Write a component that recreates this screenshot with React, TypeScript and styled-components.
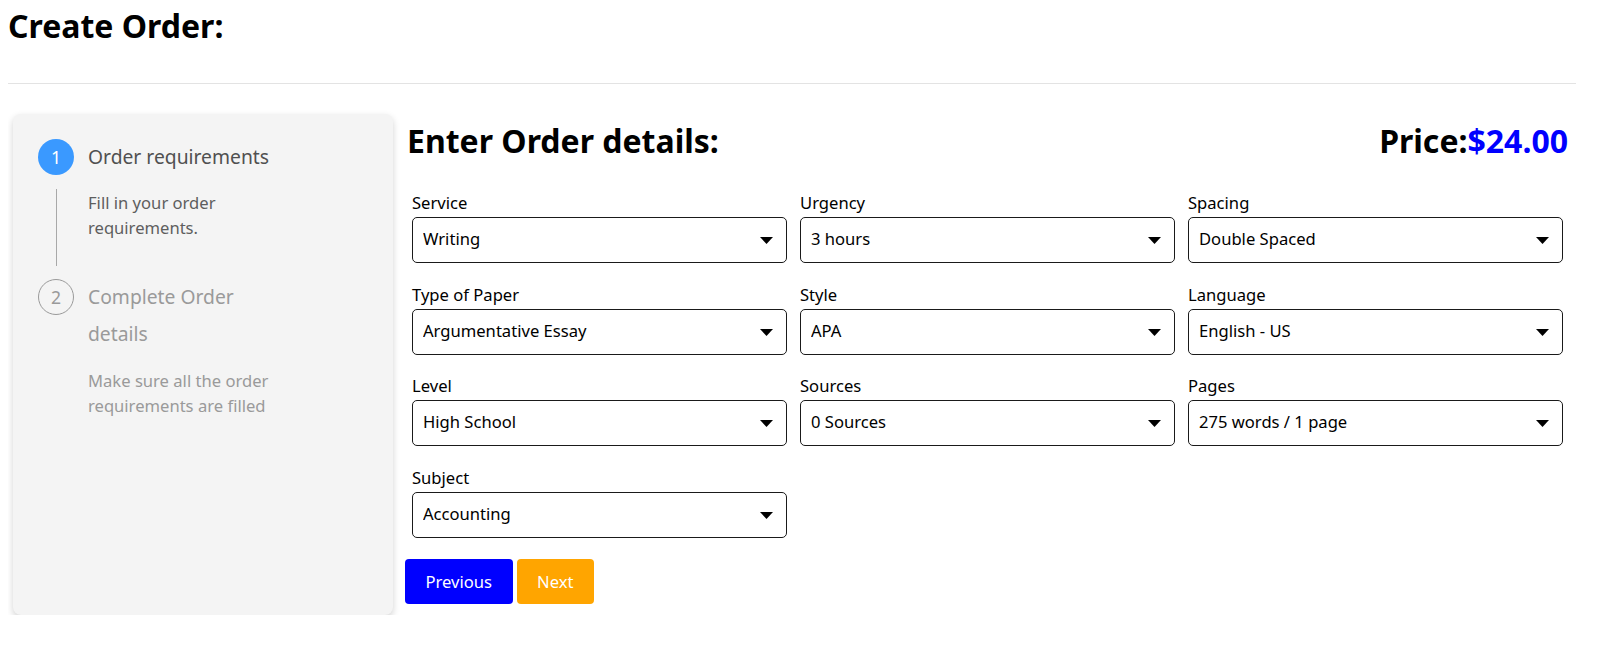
import React from "react";
import styled, { createGlobalStyle } from "styled-components";

const GlobalStyle = createGlobalStyle`
  * { box-sizing: border-box; }
  body {
    margin: 8px;
    background: #ffffff;
    color: #000000;
    font-family: "Noto Sans", "Open Sans", sans-serif;
  }
`;

const Page = styled.div`
  width: 1568px;
  display: flex;
  flex-direction: column;
`;

const PageTitle = styled.h1`
  margin: 0;
  font-size: 32px;
  line-height: 36px;
  font-weight: 700;
`;

const Divider = styled.div`
  height: 1px;
  margin-top: 39px;
  background: #e3e3e3;
`;

const Content = styled.div`
  display: flex;
  align-items: flex-start;
  gap: 12px;
  margin-top: 30px;
  padding-left: 5px;
`;

const Sidebar = styled.aside`
  flex: 0 0 380px;
  height: 501px;
  background: #f4f4f4;
  border-radius: 8px;
  box-shadow: 0 3px 7px rgba(0, 0, 0, 0.18);
  padding: 24px 0 0 25px;
  display: flex;
  flex-direction: column;
`;

const Step = styled.div`
  display: grid;
  grid-template-columns: 36px 196px;
  column-gap: 14px;
`;

const StepHead = styled.div`
  display: flex;
  flex-direction: column;
  align-items: center;
`;

const Circle = styled.div<{ $active?: boolean }>`
  width: 36px;
  height: 36px;
  margin-top: 1px;
  border-radius: 50%;
  display: flex;
  align-items: center;
  justify-content: center;
  font-size: 17.6px;
  background: ${(p) => (p.$active ? "#3a99ff" : "transparent")};
  color: ${(p) => (p.$active ? "#ffffff" : "#9a9a9a")};
  border: ${(p) => (p.$active ? "none" : "1px solid #9a9a9a")};
`;

const StepLine = styled.div`
  width: 1px;
  height: 77px;
  margin: 14px 0 12px;
  background: #a8a8a8;
`;

const StepMain = styled.div`
  display: flex;
  flex-direction: column;
`;

const StepTitle = styled.div<{ $active?: boolean }>`
  font-size: 19.3px;
  line-height: 37px;
  color: ${(p) => (p.$active ? "#505050" : "#9a9a9a")};
`;

const StepDesc = styled.div<{ $active?: boolean }>`
  margin-top: ${(p) => (p.$active ? "15px" : "16px")};
  font-size: 16.6px;
  line-height: 25px;
  color: ${(p) => (p.$active ? "#5e5e5e" : "#9a9a9a")};
`;

const Main = styled.main`
  flex: 1;
  padding-right: 6px;
  display: flex;
  flex-direction: column;
`;

const HeadRow = styled.div`
  display: flex;
  justify-content: space-between;
  align-items: baseline;
  margin-top: 7px;
  padding: 0 2px;
`;

const Heading = styled.h2`
  margin: 0;
  font-size: 32px;
  line-height: 40px;
  font-weight: 700;
`;

const Price = styled.div`
  font-size: 32px;
  line-height: 40px;
  font-weight: 700;
`;

const Amount = styled.span`
  color: #0000ff;
`;

const FormGrid = styled.div`
  display: grid;
  grid-template-columns: repeat(3, 375px);
  column-gap: 13px;
  row-gap: 19.7px;
  margin-top: 30px;
  padding: 0 7px;
`;

const Field = styled.label`
  display: flex;
  flex-direction: column;
`;

const FieldLabel = styled.span`
  font-size: 16.6px;
  line-height: 24px;
  margin-bottom: 2px;
`;

const SelectWrap = styled.div`
  position: relative;
  height: 46px;
`;

const Select = styled.select`
  appearance: none;
  -webkit-appearance: none;
  width: 100%;
  height: 46px;
  border: 1px solid #1a1a1a;
  border-radius: 5px;
  background: #ffffff;
  padding: 0 36px 3px 10px;
  font-family: inherit;
  font-size: 16.6px;
  color: #000000;
  outline: none;
`;

const Arrow = styled.svg`
  position: absolute;
  right: 14px;
  top: 20px;
  width: 13px;
  height: 7px;
  pointer-events: none;
`;

const ButtonRow = styled.div`
  display: flex;
  gap: 4px;
  margin-top: 21px;
`;

const Button = styled.button<{ $bg: string }>`
  height: 45px;
  padding: 0 20.5px;
  border: none;
  border-radius: 4px;
  background: ${(p) => p.$bg};
  color: #ffffff;
  font-family: inherit;
  font-size: 16.6px;
  cursor: pointer;
`;

type FieldDef = { label: string; value: string };

const fields: FieldDef[] = [
  { label: "Service", value: "Writing" },
  { label: "Urgency", value: "3 hours" },
  { label: "Spacing", value: "Double Spaced" },
  { label: "Type of Paper", value: "Argumentative Essay" },
  { label: "Style", value: "APA" },
  { label: "Language", value: "English - US" },
  { label: "Level", value: "High School" },
  { label: "Sources", value: "0 Sources" },
  { label: "Pages", value: "275 words / 1 page" },
  { label: "Subject", value: "Accounting" },
];

function SelectField({ label, value }: FieldDef) {
  return (
    <Field>
      <FieldLabel>{label}</FieldLabel>
      <SelectWrap>
        <Select defaultValue={value}>
          <option value={value}>{value}</option>
        </Select>
        <Arrow viewBox="0 0 13 7" aria-hidden="true">
          <polygon points="0,0 13,0 6.5,7" fill="#000" />
        </Arrow>
      </SelectWrap>
    </Field>
  );
}

export default function App() {
  return (
    <>
      <GlobalStyle />
      <Page>
        <PageTitle>Create Order:</PageTitle>
        <Divider />
        <Content>
          <Sidebar>
            <Step>
              <StepHead>
                <Circle $active>1</Circle>
                <StepLine />
              </StepHead>
              <StepMain>
                <StepTitle $active>Order requirements</StepTitle>
                <StepDesc $active>Fill in your order requirements.</StepDesc>
              </StepMain>
            </Step>
            <Step>
              <StepHead>
                <Circle>2</Circle>
              </StepHead>
              <StepMain>
                <StepTitle>Complete Order details</StepTitle>
                <StepDesc>Make sure all the order requirements are filled</StepDesc>
              </StepMain>
            </Step>
          </Sidebar>
          <Main>
            <HeadRow>
              <Heading>Enter Order details:</Heading>
              <Price>
                Price:<Amount>$24.00</Amount>
              </Price>
            </HeadRow>
            <FormGrid>
              {fields.map((f) => (
                <SelectField key={f.label} {...f} />
              ))}
            </FormGrid>
            <ButtonRow>
              <Button $bg="#0000ff">Previous</Button>
              <Button $bg="#ffa500">Next</Button>
            </ButtonRow>
          </Main>
        </Content>
      </Page>
    </>
  );
}
